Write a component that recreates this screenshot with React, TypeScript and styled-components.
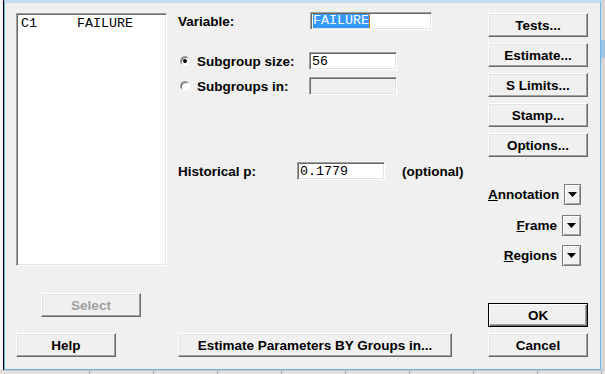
import styled, { createGlobalStyle } from "styled-components";

const GlobalStyle = createGlobalStyle`
  html, body {
    margin: 0;
    padding: 0;
    background: #f0f0f0;
  }
  body {
    font-family: "Liberation Sans", Arial, sans-serif;
    font-size: 13.5px;
    font-weight: bold;
    color: #000;
  }
`;

const Screen = styled.div`
  width: 605px;
  height: 374px;
  display: flex;
  flex-direction: column;
  overflow: hidden;
  background: #f0f0f0;
`;

const Middle = styled.div`
  display: flex;
  height: 370px;
`;

const LeftGutter = styled.div`
  width: 3px;
  background: #f4f4f4;
  border-right: 1px solid #000;
`;

const RightGutter = styled.div`
  flex: 1;
  background: linear-gradient(#d6d6d6 0 40px, #9fc3e4 40px 58px, #d6d6d6 58px);
`;

const BottomStrip = styled.div`
  flex: 1;
  background: repeating-linear-gradient(to right, #e2e2e2 0 63px, #a0a0a0 63px 64px);
  background-position-x: 26px;
  border-top: 1px solid #c8c8c8;
`;

const Dialog = styled.div`
  width: 597px;
  box-sizing: border-box;
  border-top: 3px solid #c6dcf2;
  border-left: 1px solid #6bb6e4;
  border-right: 1px solid #6bb6e4;
  border-bottom: 1px solid #6bb6e4;
  padding: 10px 12px 12px 11px;
  display: flex;
  background: #f0f0f0;
`;

const Column = styled.div<{ $width?: number; $gap?: number }>`
  display: flex;
  flex-direction: column;
  width: ${(p) => (p.$width ? `${p.$width}px` : "auto")};
  flex: ${(p) => (p.$width ? "none" : "1")};
  margin-right: ${(p) => p.$gap ?? 0}px;
`;

const ListBox = styled.div`
  height: 253px;
  box-sizing: border-box;
  background: #fff;
  border: 1px solid;
  border-color: #a0a0a0 #fff #fff #a0a0a0;
  box-shadow: inset 1px 1px #696969, inset -1px -1px #e3e3e3;
  padding: 2px 4px;
`;

const ListItem = styled.div`
  font-family: "Liberation Mono", "Courier New", monospace;
  font-weight: normal;
  font-size: 13.33px;
  line-height: 15px;
  white-space: pre;
`;

const Button = styled.button<{ $width?: number; $default?: boolean; $top?: number; $left?: number }>`
  width: ${(p) => p.$width ?? 100}px;
  height: 24px;
  margin-top: ${(p) => p.$top ?? 0}px;
  margin-left: ${(p) => p.$left ?? 0}px;
  padding: 0;
  box-sizing: border-box;
  font-family: "Liberation Sans", Arial, sans-serif;
  font-size: 13.5px;
  font-weight: bold;
  color: #000;
  background: #f0f0f0;
  border: 1px solid;
  border-color: ${(p) => (p.$default ? "#000" : "#fff #696969 #696969 #fff")};
  box-shadow: ${(p) =>
    p.$default
      ? "inset 1px 1px #fff, inset -1px -1px #696969, inset -2px -2px #a0a0a0"
      : "inset -1px -1px #a0a0a0, inset 1px 1px #e3e3e3"};
  flex: none;

  &:disabled {
    color: #a0a0a0;
  }
`;

const Row = styled.div<{ $top: number }>`
  display: flex;
  align-items: center;
  height: 18px;
  margin-top: ${(p) => p.$top}px;
`;

const Label = styled.div<{ $width: number }>`
  width: ${(p) => p.$width}px;
  flex: none;
  display: flex;
  align-items: center;
  white-space: nowrap;
`;

const TextBox = styled.div<{ $width: number; $disabled?: boolean }>`
  width: ${(p) => p.$width}px;
  height: 18px;
  box-sizing: border-box;
  background: ${(p) => (p.$disabled ? "#f0f0f0" : "#fff")};
  border: 1px solid;
  border-color: #a0a0a0 #fff #fff #a0a0a0;
  box-shadow: inset 1px 1px #696969, inset -1px -1px #e3e3e3;
  padding: 0 2px;
  display: flex;
  align-items: center;
  font-family: "Liberation Mono", "Courier New", monospace;
  font-weight: normal;
  font-size: 13.33px;
  flex: none;
`;

const Selected = styled.span`
  background: #3399ff;
  color: #fff;
  line-height: 14px;
  border-right: 1px solid #d07a1c;
`;

const Radio = styled.span<{ $checked?: boolean }>`
  width: 10px;
  height: 10px;
  border-radius: 50%;
  box-sizing: border-box;
  margin: 0 7px 0 2px;
  background: #fff;
  border: 1px solid;
  border-color: #a0a0a0 #fff #fff #a0a0a0;
  box-shadow: inset 1px 1px #696969;
  display: flex;
  align-items: center;
  justify-content: center;

  &::after {
    content: "";
    width: 4px;
    height: 4px;
    border-radius: 50%;
    background: ${(p) => (p.$checked ? "#000" : "transparent")};
  }
`;

const Note = styled.span`
  margin-left: 17px;
`;

const Spacer = styled.div`
  flex: 1;
`;

const DropRow = styled.div<{ $top: number }>`
  display: flex;
  justify-content: flex-end;
  align-items: center;
  gap: 5px;
  height: 21px;
  margin-top: ${(p) => p.$top}px;
  padding-right: 7px;
`;

const DropButton = styled.div`
  width: 19px;
  height: 21px;
  box-sizing: border-box;
  border: 1px solid #7a7a7a;
  box-shadow: inset 1px 1px #fff, inset -1px -1px #a0a0a0;
  background: #f0f0f0;
  display: flex;
  align-items: center;
  justify-content: center;
`;

const Arrow = () => (
  <svg width="9" height="5" viewBox="0 0 9 5">
    <polygon points="0,0 9,0 4.5,5" fill="#000" />
  </svg>
);

const Drop = ({ hot, rest, top }: { hot: string; rest: string; top: number }) => (
  <DropRow $top={top}>
    <span>
      <u>{hot}</u>
      {rest}
    </span>
    <DropButton>
      <Arrow />
    </DropButton>
  </DropRow>
);

export default function App() {
  return (
    <>
      <GlobalStyle />
      <Screen>
        <Middle>
          <LeftGutter />
          <Dialog>
            <Column $width={151} $gap={11}>
              <ListBox>
                <ListItem>{"C1     FAILURE"}</ListItem>
              </ListBox>
              <Button $width={100} $top={27} $left={25} disabled>
                Select
              </Button>
              <Spacer />
              <Button $width={100}>Help</Button>
            </Column>

            <Column $gap={10}>
              <Row $top={-1}>
                <Label $width={132}>Variable:</Label>
                <TextBox $width={122}>
                  <Selected>FAILURE</Selected>
                </TextBox>
              </Row>
              <Row $top={22}>
                <Label $width={131}>
                  <Radio $checked />
                  Subgroup size:
                </Label>
                <TextBox $width={88}>56</TextBox>
              </Row>
              <Row $top={7}>
                <Label $width={131}>
                  <Radio />
                  Subgroups in:
                </Label>
                <TextBox $width={88} $disabled />
              </Row>
              <Row $top={67}>
                <Label $width={119}>Historical p:</Label>
                <TextBox $width={88}>0.1779</TextBox>
                <Note>(optional)</Note>
              </Row>
              <Spacer />
              <Button $width={274}>Estimate Parameters BY Groups in...</Button>
            </Column>

            <Column $width={100}>
              <Button>Tests...</Button>
              <Button $top={6}>Estimate...</Button>
              <Button $top={6}>S Limits...</Button>
              <Button $top={6}>Stamp...</Button>
              <Button $top={6}>Options...</Button>
              <Drop hot="A" rest="nnotation" top={27} />
              <Drop hot="F" rest="rame" top={10} />
              <Drop hot="R" rest="egions" top={9} />
              <Spacer />
              <Button $default>OK</Button>
              <Button $top={6}>Cancel</Button>
            </Column>
          </Dialog>
          <RightGutter />
        </Middle>
        <BottomStrip />
      </Screen>
    </>
  );
}
